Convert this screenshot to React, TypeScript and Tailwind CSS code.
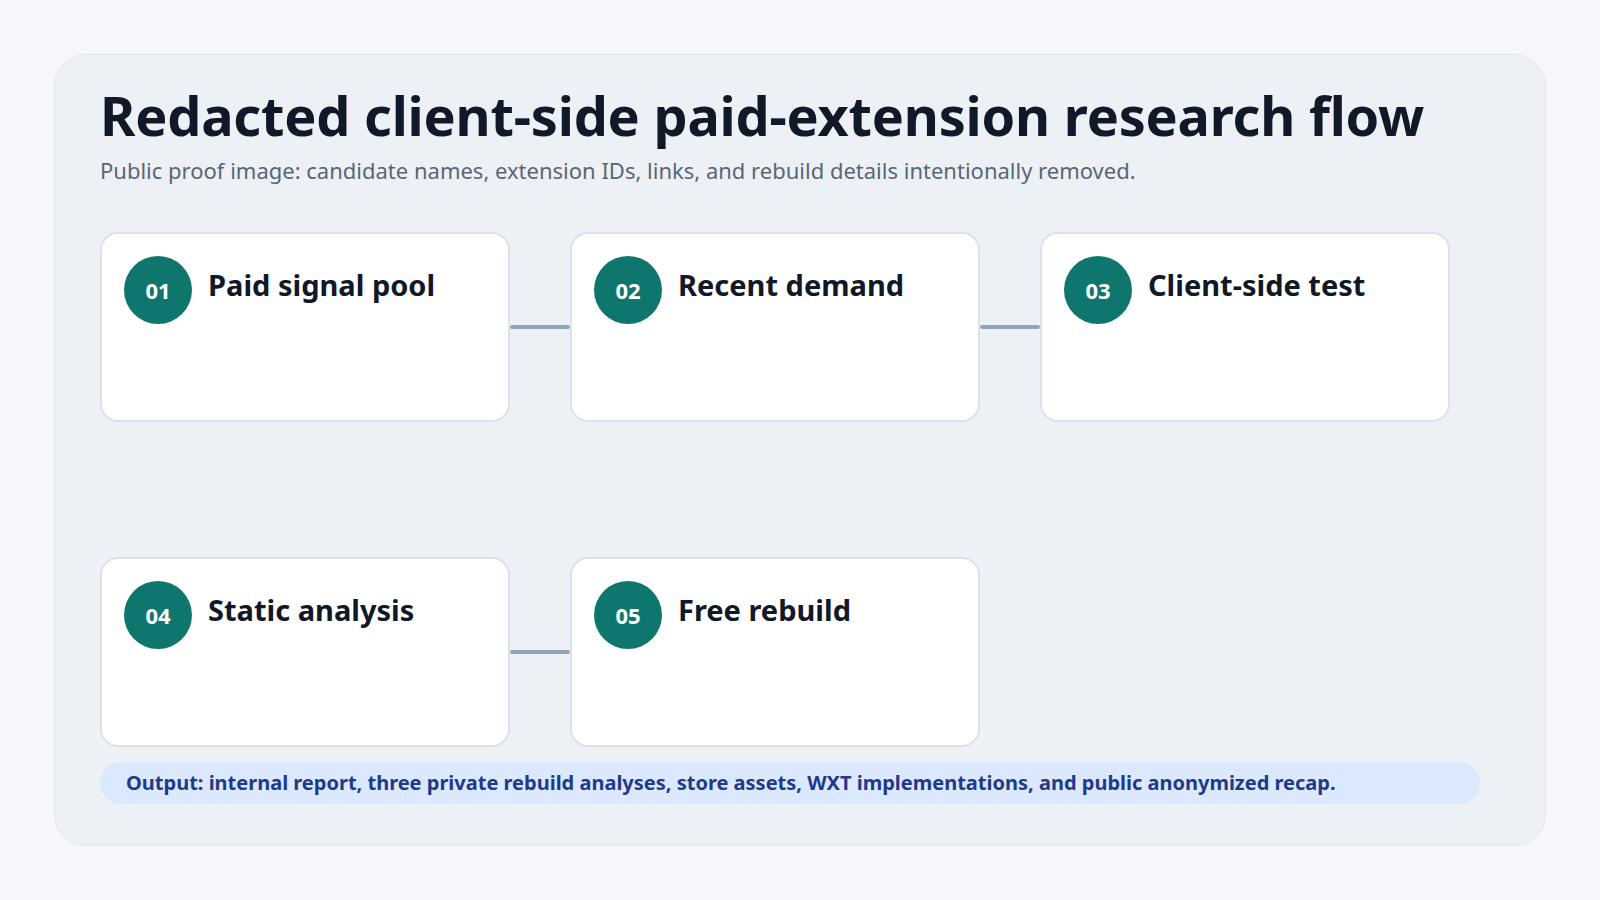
const steps = [
  { n: '01', title: 'Paid signal pool' },
  { n: '02', title: 'Recent demand' },
  { n: '03', title: 'Client-side test' },
  { n: '04', title: 'Static analysis' },
  { n: '05', title: 'Free rebuild' },
];

function Card({ n, title }: { n: string; title: string }) {
  return (
    <div className="w-[410px] h-[190px] shrink-0 bg-white border-2 border-[#dbe2ec] rounded-[18px] p-[22px] flex items-start gap-[16px]">
      <div className="w-[68px] h-[68px] rounded-full bg-[#0f766e] text-white flex items-center justify-center text-[22px] font-bold pt-[2px]">
        {n}
      </div>
      <div className="text-[29px] font-bold text-[#111827] leading-none mt-[14px]">{title}</div>
    </div>
  );
}

function Connector() {
  return <div className="w-[60px] h-[4px] bg-[#94a3b8] rounded-full shrink-0" />;
}

export default function App() {
  return (
    <div className="w-[1600px] h-[900px] bg-[#f5f7fa] p-[54px] pr-[54px] font-['Liberation_Sans',Arial,sans-serif]">
      <div className="w-[1492px] h-[792px] bg-[#edf1f6] border border-[#e1e6ee] rounded-[32px] pl-[45px] pt-[28px]">
        <h1 className="text-[54px] font-bold text-[#111827] leading-[1.2] tracking-[-0.2px]">
          Redacted client-side paid-extension research flow
        </h1>
        <p className="text-[22px] text-[#5b6577] mt-[6px]">
          Public proof image: candidate names, extension IDs, links, and rebuild details intentionally removed.
        </p>
        <div className="mt-[45px] flex items-center">
          <Card {...steps[0]} />
          <Connector />
          <Card {...steps[1]} />
          <Connector />
          <Card {...steps[2]} />
        </div>
        <div className="mt-[135px] flex items-center">
          <Card {...steps[3]} />
          <Connector />
          <Card {...steps[4]} />
        </div>
        <div className="mt-[15px] w-[1380px] h-[42px] rounded-full bg-[#dbe8fd] flex items-center pl-[26px] text-[20px] font-bold text-[#1e3a8a]">
          Output: internal report, three private rebuild analyses, store assets, WXT implementations, and public anonymized recap.
        </div>
      </div>
    </div>
  );
}
